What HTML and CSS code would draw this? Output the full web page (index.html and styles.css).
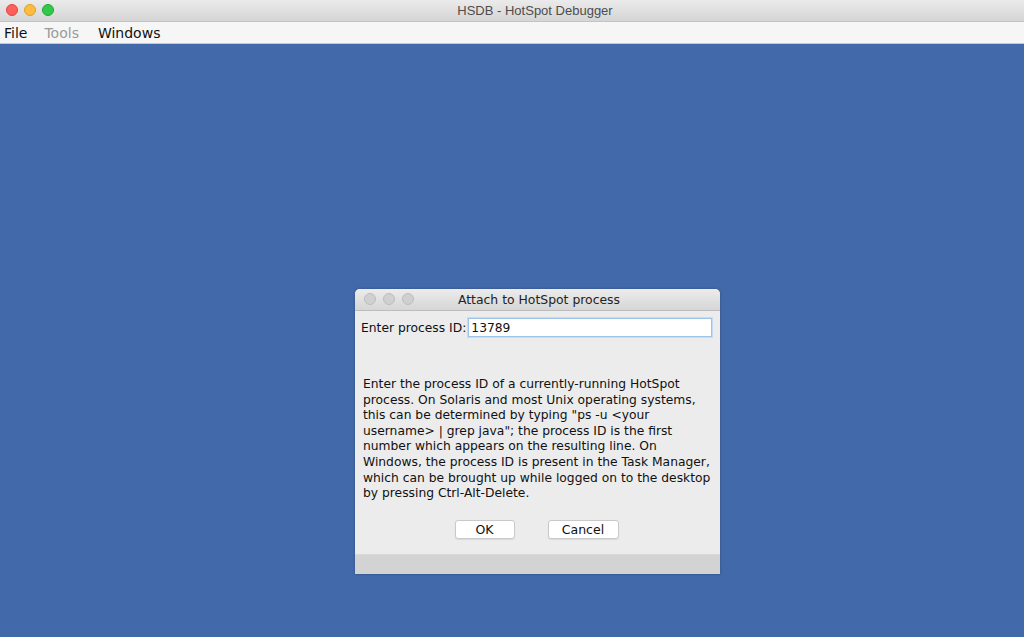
FILE: index.html
```html
<!DOCTYPE html>
<html lang="en">
<head>
    <meta charset="UTF-8">
    <title>HSDB - HotSpot Debugger</title>
    <link rel="stylesheet" href="styles.css">
</head>
<body>
    <div class="window">
        <!-- Main title bar -->
        <div class="titlebar">
            <div class="lights">
                <span class="light red"></span>
                <span class="light yellow"></span>
                <span class="light green"></span>
            </div>
            <div class="title">HSDB - HotSpot Debugger</div>
        </div>

        <!-- Menu bar -->
        <div class="menubar">
            <span class="menu-item">File</span>
            <span class="menu-item disabled">Tools</span>
            <span class="menu-item">Windows</span>
        </div>

        <!-- Desktop area -->
        <div class="desktop">
            <div class="dialog">
                <div class="dialog-titlebar">
                    <div class="lights small">
                        <span class="light off"></span>
                        <span class="light off"></span>
                        <span class="light off"></span>
                    </div>
                    <div class="dialog-title">Attach to HotSpot process</div>
                </div>
                <div class="dialog-body">
                    <div class="pid-row">
                        <label for="pid">Enter process ID:</label>
                        <input id="pid" class="pid-input" type="text" value="13789">
                    </div>
                    <p class="help">
                        Enter the process ID of a currently-running HotSpot<br>
                        process. On Solaris and most Unix operating systems,<br>
                        this can be determined by typing "ps -u &lt;your<br>
                        username&gt; | grep java"; the process ID is the first<br>
                        number which appears on the resulting line. On<br>
                        Windows, the process ID is present in the Task Manager,<br>
                        which can be brought up while logged on to the desktop<br>
                        by pressing Ctrl-Alt-Delete.
                    </p>
                    <div class="buttons">
                        <button class="btn ok">OK</button>
                        <button class="btn cancel">Cancel</button>
                    </div>
                </div>
                <div class="dialog-footer"></div>
            </div>
        </div>
    </div>
</body>
</html>
```

FILE: styles.css
```css
html, body {
    margin: 0;
    padding: 0;
    height: 100%;
}

body {
    font-family: "DejaVu Sans", "Liberation Sans", sans-serif;
    overflow: hidden;
}

.window {
    display: flex;
    flex-direction: column;
    height: 637px;
}

.titlebar {
    position: relative;
    height: 22px;
    background: linear-gradient(#ebebeb, #d5d5d5);
    border-bottom: 1px solid #c4c4c4;
    box-sizing: border-box;
    display: flex;
    align-items: center;
    justify-content: center;
    padding-left: 46px;
}

.lights {
    position: absolute;
    left: 6px;
    top: 4px;
    display: flex;
    gap: 6px;
}

.light {
    width: 12px;
    height: 12px;
    border-radius: 50%;
    box-sizing: border-box;
}

.red {
    background-color: #fc605c;
    border: 1px solid #e0443e;
}

.yellow {
    background-color: #fdbc40;
    border: 1px solid #dea123;
}

.green {
    background-color: #34c84a;
    border: 1px solid #1ea930;
}

.title {
    font-family: "Liberation Sans", "Inter", sans-serif;
    font-size: 13px;
    color: #4d4d4d;
}

.menubar {
    height: 21px;
    background-color: #f6f6f6;
    border-bottom: 1px solid #c9c9c9;
    display: flex;
    align-items: center;
    padding-left: 4px;
}

.menu-item {
    font-size: 14px;
    color: #111;
    margin-right: 17px;
}

.menu-item.disabled {
    color: #9a9a9a;
    margin-right: 19px;
}

.desktop {
    flex: 1;
    background-color: #4269a9;
    position: relative;
}

.dialog {
    position: absolute;
    left: 355px;
    top: 245px;
    width: 365px;
    background-color: #ececec;
    border-radius: 5px 5px 0 0;
    box-shadow: 0 0 3px rgba(0, 0, 0, 0.25);
    overflow: hidden;
}

.dialog-titlebar {
    position: relative;
    height: 22px;
    background: linear-gradient(#ececec, #d6d6d6);
    border-bottom: 1px solid #bdbdbd;
    box-sizing: border-box;
    display: flex;
    align-items: center;
    justify-content: center;
}

.lights.small {
    left: 9px;
    top: 4px;
    gap: 7px;
}

.light.off {
    background-color: #d0d0d0;
    border: 1px solid #bcbcbc;
}

.dialog-title {
    font-size: 12.4px;
    color: #222;
    padding-left: 3px;
}

.dialog-body {
    padding: 7px 8px 0 6px;
    height: 243px;
    box-sizing: border-box;
}

.pid-row {
    display: flex;
    align-items: center;
    font-size: 12.3px;
    color: #111;
}

.pid-row label {
    margin-right: 2px;
}

.pid-input {
    flex: 1;
    height: 19px;
    box-sizing: border-box;
    border: 1px solid #9fc4ec;
    box-shadow: 0 0 0 1px #c5dcf5;
    padding: 0 2px;
    font-family: "DejaVu Sans", sans-serif;
    font-size: 12.3px;
    color: #111;
    background-color: #fff;
    outline: none;
}

.help {
    margin: 40px 0 0 2px;
    font-size: 12.3px;
    line-height: 15.6px;
    color: #111;
    white-space: nowrap;
}

.buttons {
    display: flex;
    justify-content: center;
    gap: 33px;
    margin-top: 18px;
    padding-left: 0;
}

.btn {
    height: 19px;
    padding: 0;
    border: 1px solid #c9c9c9;
    border-radius: 3px;
    background-color: #fff;
    font-family: "DejaVu Sans", sans-serif;
    font-size: 12.5px;
    color: #111;
    box-shadow: 0 1px 1px rgba(0, 0, 0, 0.08);
}

.btn.ok {
    width: 60px;
}

.btn.cancel {
    width: 71px;
}

.dialog-footer {
    height: 19px;
    background-color: #d3d3d3;
    border-top: 1px solid #dadada;
}
```
